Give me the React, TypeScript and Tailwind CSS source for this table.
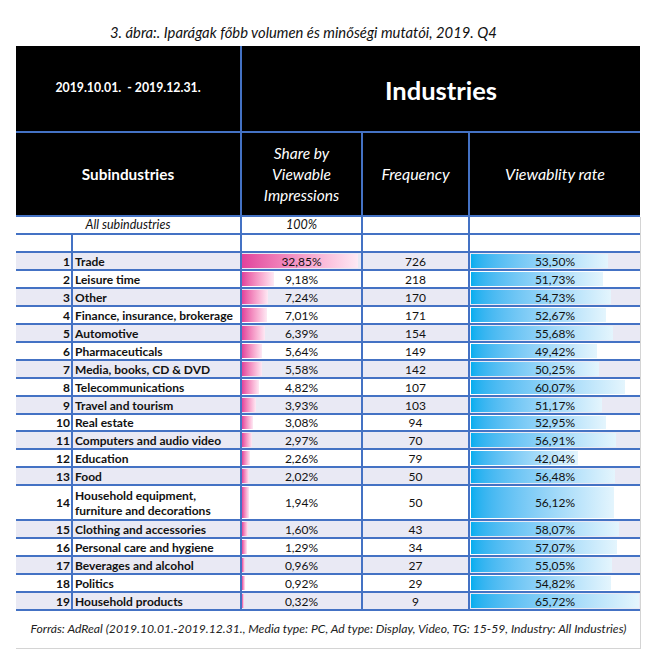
import React from "react";

type Row = { n: number; name: React.ReactNode; share: string; s: number; freq: string; view: string; v: number; tall?: boolean };

const rows: Row[] = [
  { n: 1, name: "Trade", share: "32,85%", s: 32.85, freq: "726", view: "53,50%", v: 53.5 },
  { n: 2, name: "Leisure time", share: "9,18%", s: 9.18, freq: "218", view: "51,73%", v: 51.73 },
  { n: 3, name: "Other", share: "7,24%", s: 7.24, freq: "170", view: "54,73%", v: 54.73 },
  { n: 4, name: "Finance, insurance, brokerage", share: "7,01%", s: 7.01, freq: "171", view: "52,67%", v: 52.67 },
  { n: 5, name: "Automotive", share: "6,39%", s: 6.39, freq: "154", view: "55,68%", v: 55.68 },
  { n: 6, name: "Pharmaceuticals", share: "5,64%", s: 5.64, freq: "149", view: "49,42%", v: 49.42 },
  { n: 7, name: "Media, books, CD & DVD", share: "5,58%", s: 5.58, freq: "142", view: "50,25%", v: 50.25 },
  { n: 8, name: "Telecommunications", share: "4,82%", s: 4.82, freq: "107", view: "60,07%", v: 60.07 },
  { n: 9, name: "Travel and tourism", share: "3,93%", s: 3.93, freq: "103", view: "51,17%", v: 51.17 },
  { n: 10, name: "Real estate", share: "3,08%", s: 3.08, freq: "94", view: "52,95%", v: 52.95 },
  { n: 11, name: "Computers and audio video", share: "2,97%", s: 2.97, freq: "70", view: "56,91%", v: 56.91 },
  { n: 12, name: "Education", share: "2,26%", s: 2.26, freq: "79", view: "42,04%", v: 42.04 },
  { n: 13, name: "Food", share: "2,02%", s: 2.02, freq: "50", view: "56,48%", v: 56.48 },
  {
    n: 14,
    name: (
      <>
        Household equipment,
        <br />
        furniture and decorations
      </>
    ),
    share: "1,94%",
    s: 1.94,
    freq: "50",
    view: "56,12%",
    v: 56.12,
    tall: true,
  },
  { n: 15, name: "Clothing and accessories", share: "1,60%", s: 1.6, freq: "43", view: "58,07%", v: 58.07 },
  { n: 16, name: "Personal care and hygiene", share: "1,29%", s: 1.29, freq: "34", view: "57,07%", v: 57.07 },
  { n: 17, name: "Beverages and alcohol", share: "0,96%", s: 0.96, freq: "27", view: "55,05%", v: 55.05 },
  { n: 18, name: "Politics", share: "0,92%", s: 0.92, freq: "29", view: "54,82%", v: 54.82 },
  { n: 19, name: "Household products", share: "0,32%", s: 0.32, freq: "9", view: "65,72%", v: 65.72 },
];

export default function App() {
  return (
    <div className="w-[660px] h-[660px] bg-white text-[#111] font-[Lato,'Liberation_Sans',sans-serif]">
      <div className="ml-[16px] w-[625px]">
        <div className="h-[46px] pt-[23px] pl-[94px] text-[14.8px] leading-[18px] italic">
          3. ábra:. Iparágak főbb volumen és minőségi mutatói, 2019. Q4
        </div>

        {/* header row 1 */}
        <div className="flex h-[87px] w-[624px] bg-black text-white border-b-2 border-[#4472c4]">
          <div className="w-[224px] flex items-center justify-center font-bold text-[12.3px] whitespace-pre">
            2019.10.01.  - 2019.12.31.
          </div>
          <div className="flex-1 border-l-2 border-[#4472c4] flex items-center justify-center pt-[3px] font-bold text-[25.5px]">
            Industries
          </div>
        </div>

        {/* header row 2 */}
        <div className="grid grid-cols-[224px_121px_107px_172px] h-[84px] w-[624px] bg-black text-white border-b-2 border-[#4472c4]">
          <div className="flex items-center justify-center font-bold text-[15.3px]">Subindustries</div>
          <div className="border-l-2 border-[#4472c4] flex items-center justify-center italic text-[15.5px] leading-[21px] text-center">
            Share by
            <br />
            Viewable
            <br />
            Impressions
          </div>
          <div className="border-l-2 border-[#4472c4] flex items-center justify-center italic text-[16px]">Frequency</div>
          <div className="border-l-2 border-[#4472c4] flex items-center justify-center italic text-[16px]">Viewablity rate</div>
        </div>

        <div className="w-[625px] border-r border-[#d4d4d4]">
          {/* all subindustries */}
          <div className="grid grid-cols-[224px_121px_107px_172px] h-[18px] w-[624px] bg-white border-b-2 border-[#4472c4] text-[12.5px] italic leading-[16px]">
            <div className="text-center">All subindustries</div>
            <div className="border-l-2 border-[#4472c4] text-center">100%</div>
            <div className="border-l-2 border-[#4472c4]"></div>
            <div className="border-l-2 border-[#4472c4]"></div>
          </div>

          {/* empty row */}
          <div className="grid grid-cols-[55px_169px_121px_107px_172px] h-[18px] w-[624px] bg-white border-b-2 border-[#4472c4]">
            <div></div>
            <div className="border-l-2 border-[#4472c4]"></div>
            <div className="border-l-2 border-[#4472c4]"></div>
            <div className="border-l-2 border-[#4472c4]"></div>
            <div className="border-l-2 border-[#4472c4]"></div>
          </div>

          {rows.map((r) => {
            const odd = r.n % 2 === 1;
            const sw = Math.max(2, (r.s / 32.85) * 116);
            const vw = (r.v / 65.72) * 168;
            const h = r.tall ? "h-[35px]" : r.n === 10 ? "h-[17px]" : "h-[18px]";
            return (
              <div
                key={r.n}
                className={`grid grid-cols-[55px_169px_121px_107px_172px] ${h} w-[624px] border-b-2 border-[#4472c4] text-[12px] leading-[15px] ${
                  odd ? "bg-[#e9e9f4]" : "bg-white"
                }`}
              >
                <div className="flex items-center justify-end pr-[1px] font-bold">{r.n}</div>
                <div className="border-l-2 border-[#4472c4] flex items-center pl-[2px] font-bold">
                  <span>{r.name}</span>
                </div>
                <div className="relative border-l-2 border-[#4472c4] flex items-center justify-center">
                  <div
                    className="absolute left-0 top-[1px] bottom-[1px] bg-linear-to-r from-[#e1409c] to-[#fde9f4]"
                    style={{ width: sw }}
                  />
                  <span className="relative">{r.share}</span>
                </div>
                <div className="border-l-2 border-[#4472c4] flex items-center justify-center">{r.freq}</div>
                <div className="relative border-l-2 border-[#4472c4] flex items-center justify-center">
                  <div
                    className="absolute left-[1px] top-[1px] bottom-[1px] bg-linear-to-r from-[#00aeef] to-[#e4f5fd]"
                    style={{ width: vw }}
                  />
                  <span className="relative">{r.view}</span>
                </div>
              </div>
            );
          })}

          {/* footer */}
          <div className="h-[38px] w-[625px] border-b border-[#d4d4d4] flex items-center justify-center italic text-[12.2px] text-[#222]">
            Forrás: AdReal (2019.10.01.-2019.12.31., Media type: PC, Ad type: Display, Video, TG: 15-59, Industry: All Industries)
          </div>
        </div>
      </div>
    </div>
  );
}
